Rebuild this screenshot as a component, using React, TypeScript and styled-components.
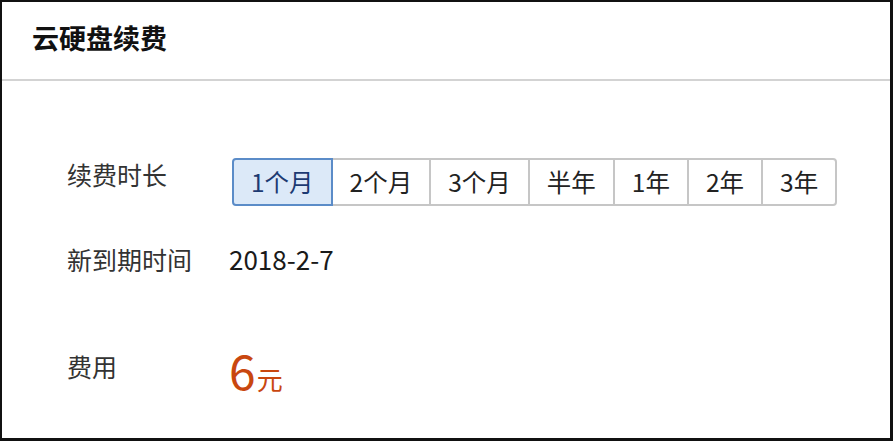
import React, { useState } from "react";
import styled, { createGlobalStyle } from "styled-components";

const GlobalStyle = createGlobalStyle`
  html, body {
    margin: 0;
    padding: 0;
    background: #ffffff;
  }
  body {
    font-family: "Noto Sans CJK SC", "Noto Sans", sans-serif;
  }
`;

const Frame = styled.div`
  width: 893px;
  height: 441px;
  box-sizing: border-box;
  border-style: solid;
  border-color: #111111;
  border-width: 2px 3px 3px 2px;
  background: #ffffff;
  display: flex;
  flex-direction: column;
`;

const Header = styled.div`
  height: 79px;
  box-sizing: border-box;
  border-bottom: 2px solid #d3d3d3;
  padding: 22px 0 0 30px;
  display: flex;
  align-items: flex-start;
`;

const Title = styled.h1`
  margin: 0;
  font-size: 27px;
  line-height: 27px;
  font-weight: 700;
  color: #111111;
`;

const Body = styled.div`
  display: flex;
  flex-direction: column;
  padding: 77px 0 0 65px;
`;

const Row = styled.div<{ $top: number }>`
  display: flex;
  flex-direction: row;
  align-items: flex-start;
  margin-top: ${(p) => p.$top}px;
`;

const Label = styled.div<{ $offset?: number }>`
  width: 162px;
  flex-shrink: 0;
  font-size: 25px;
  line-height: 32px;
  color: #333333;
  margin-top: ${(p) => p.$offset || 0}px;
`;

const Value = styled.div`
  font-size: 26px;
  line-height: 32px;
  color: #1a1a1a;
`;

const Options = styled.div`
  display: flex;
  flex-direction: row;
  margin-left: 3px;
`;

const Option = styled.button<{ $active: boolean }>`
  position: relative;
  height: 48px;
  box-sizing: border-box;
  padding: 0 17px;
  margin: 0 0 0 -2px;
  font-family: inherit;
  font-size: 24.5px;
  line-height: 44px;
  cursor: pointer;
  border: 2px solid ${(p) => (p.$active ? "#5b8cc8" : "#c6c6c6")};
  background: ${(p) => (p.$active ? "#dce9f8" : "#ffffff")};
  color: ${(p) => (p.$active ? "#1c3a72" : "#222222")};
  z-index: ${(p) => (p.$active ? 1 : 0)};
  border-radius: 0;

  &:first-child {
    margin-left: 0;
    border-radius: 4px 0 0 4px;
  }
  &:last-child {
    border-radius: 0 4px 4px 0;
  }
`;

const Price = styled.div`
  display: flex;
  align-items: baseline;
  color: #c9470f;
  line-height: 48px;
`;

const PriceAmount = styled.span`
  font-size: 48px;
`;

const PriceUnit = styled.span`
  font-size: 26px;
  margin-left: 1px;
`;

const durations = ["1个月", "2个月", "3个月", "半年", "1年", "2年", "3年"];

const App = () => {
  const [selected, setSelected] = useState(0);

  return (
    <>
      <GlobalStyle />
      <Frame>
        <Header>
          <Title>云硬盘续费</Title>
        </Header>
        <Body>
          <Row $top={0}>
            <Label>续费时长</Label>
            <Options>
              {durations.map((d, i) => (
                <Option
                  key={d}
                  $active={i === selected}
                  onClick={() => setSelected(i)}
                >
                  {d}
                </Option>
              ))}
            </Options>
          </Row>
          <Row $top={37}>
            <Label>新到期时间</Label>
            <Value>2018-2-7</Value>
          </Row>
          <Row $top={70}>
            <Label $offset={5}>费用</Label>
            <Price>
              <PriceAmount>6</PriceAmount>
              <PriceUnit>元</PriceUnit>
            </Price>
          </Row>
        </Body>
      </Frame>
    </>
  );
};

export default App;
